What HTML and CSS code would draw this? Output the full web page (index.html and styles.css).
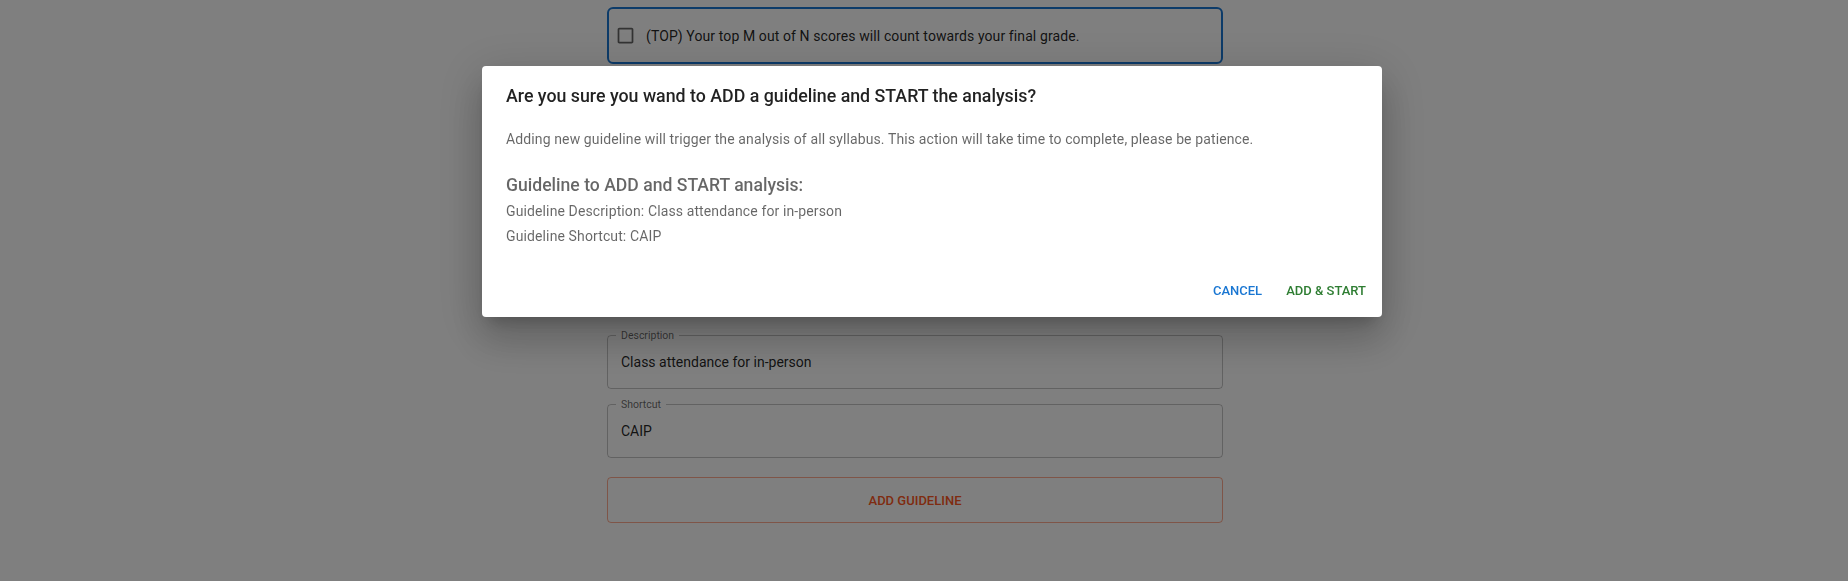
FILE: index.html
```html
<!DOCTYPE html>
<html lang="en">
<head>
<meta charset="utf-8">
<title>Add guideline</title>
<link rel="stylesheet" href="styles.css">
</head>
<body>
<div class="page">
  <main class="column">
    <label class="option-card">
      <svg class="cb-icon" viewBox="0 0 24 24" width="21" height="21"><path d="M19 5v14H5V5h14m0-2H5c-1.1 0-2 .9-2 2v14c0 1.1.9 2 2 2h14c1.1 0 2-.9 2-2V5c0-1.1-.9-2-2-2z"/></svg>
      <span class="option-text">(TOP) Your top M out of N scores will count towards your final grade.</span>
    </label>
    <div class="hidden-area"></div>
    <div class="field">
      <fieldset class="field-outline"><legend>Description</legend></fieldset>
      <span class="field-value">Class attendance for in-person</span>
    </div>
    <div class="field">
      <fieldset class="field-outline"><legend>Shortcut</legend></fieldset>
      <span class="field-value">CAIP</span>
    </div>
    <button class="add-btn" type="button">Add guideline</button>
  </main>
</div>

<div class="backdrop"></div>
<div class="dialog" role="dialog">
  <h2 class="dialog-title">Are you sure you wand to ADD a guideline and START the analysis?</h2>
  <div class="dialog-content">
    <p class="dialog-text">Adding new guideline will trigger the analysis of all syllabus. This action will take time to complete, please be patience.</p>
    <h3 class="dialog-subtitle">Guideline to ADD and START analysis:</h3>
    <p class="dialog-line">Guideline Description: Class attendance for in-person</p>
    <p class="dialog-line last">Guideline Shortcut: CAIP</p>
  </div>
  <div class="dialog-actions">
    <button class="text-btn cancel" type="button">Cancel</button>
    <button class="text-btn confirm" type="button">Add &amp; Start</button>
  </div>
</div>
</body>
</html>
```

FILE: styles.css
```css
* { box-sizing: border-box; }
html, body { margin: 0; padding: 0; }
body {
  background: #ffffff;
  font-family: Roboto, "Liberation Sans", Arial, sans-serif;
  color: rgba(0,0,0,0.87);
  width: 1848px;
  height: 581px;
  overflow: hidden;
}
.page {
  padding: 7px 18px 0 0;
}
.column {
  width: 616px;
  margin: 0 auto;
  display: flex;
  flex-direction: column;
}
.option-card {
  height: 57px;
  border: 2px solid #1976d2;
  border-radius: 6px;
  display: flex;
  align-items: center;
  padding-left: 6px;
  gap: 10px;
}
.cb-icon { fill: rgba(0,0,0,0.6); flex: none; }
.option-text {
  font-size: 14px;
  color: rgba(0,0,0,0.87);
  letter-spacing: 0.1px;
}
.hidden-area { height: 271px; }
.field {
  position: relative;
  height: 54px;
  margin-bottom: 15px;
  display: flex;
  align-items: center;
  padding: 0 14px;
}
.field-outline {
  position: absolute;
  inset: -5px 0 0 0;
  margin: 0;
  padding: 0 8px;
  border: 1px solid rgba(0,0,0,0.23);
  border-radius: 4px;
  pointer-events: none;
}
.field-outline legend {
  padding: 0 5px;
  font-size: 10.5px;
  line-height: 11px;
  color: rgba(0,0,0,0.6);
}
.field-value {
  font-size: 14px;
  color: rgba(0,0,0,0.87);
}
.add-btn {
  margin-top: 4px;
  height: 46px;
  border: 1px solid rgba(255,87,34,0.5);
  border-radius: 4px;
  background: transparent;
  color: #ff5722;
  font-family: inherit;
  font-size: 13px;
  font-weight: 500;
  letter-spacing: 0;
  text-transform: uppercase;
}
.backdrop {
  position: fixed;
  inset: 0;
  background: rgba(0,0,0,0.5);
}
.dialog {
  position: fixed;
  top: 66px;
  left: 482px;
  width: 900px;
  background: #fff;
  border-radius: 4px;
  box-shadow: 0px 11px 15px -7px rgba(0,0,0,0.2), 0px 24px 38px 3px rgba(0,0,0,0.14), 0px 9px 46px 8px rgba(0,0,0,0.12);
}
.dialog-title {
  margin: 0;
  padding: 16px 24px;
  font-size: 17.8px;
  font-weight: 500;
  line-height: 28.8px;
  letter-spacing: 0;
  color: rgba(0,0,0,0.87);
}
.dialog-content {
  padding: 2px 24px 18.5px;
}
.dialog-text, .dialog-line {
  margin: 0;
  font-size: 14px;
  line-height: 20px;
  letter-spacing: 0.12px;
  color: rgba(0,0,0,0.6);
}
.dialog-line + .dialog-line { margin-top: 5px; }
.dialog-subtitle {
  margin: 24.5px 0 3.6px;
  font-size: 17.6px;
  font-weight: 500;
  line-height: 24px;
  letter-spacing: 0;
  color: rgba(0,0,0,0.6);
}
.dialog-actions {
  display: flex;
  justify-content: flex-end;
  gap: 8px;
  padding: 9px 8px 7px;
}
.text-btn {
  border: 0;
  background: transparent;
  padding: 6px 8px;
  font-family: inherit;
  font-size: 13px;
  font-weight: 500;
  line-height: 24.5px;
  letter-spacing: 0;
  text-transform: uppercase;
  border-radius: 4px;
}
.cancel { color: #1976d2; }
.confirm { color: #2e7d32; }
```
